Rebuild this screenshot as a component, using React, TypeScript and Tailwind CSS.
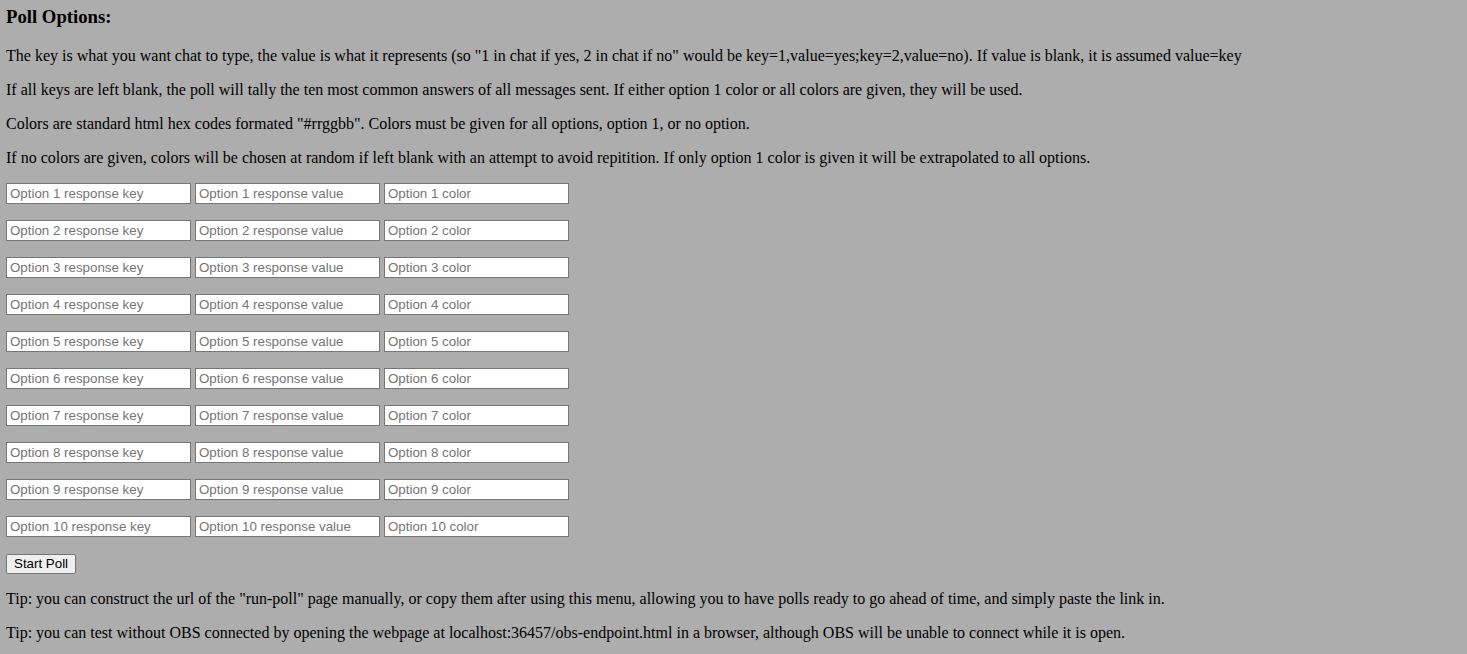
import React from "react";

export default function App() {
  const rows = Array.from({ length: 10 }, (_, i) => i + 1);
  const inputCls =
    "w-[185px] h-[21px] bg-white border border-[#767676] pl-[3px] pr-[2px] text-[13.33px] leading-[normal] font-['Liberation_Sans',Arial,sans-serif] text-black placeholder:text-[#757575] outline-none";
  return (
    <div className="min-h-[654px] bg-[#adadad] px-[6px] pt-[6px] pb-[1px] text-black font-['Liberation_Serif','Times_New_Roman',serif] text-[16px] leading-[normal] flow-root">
      <h3 className="mt-0 mb-[18.72px] text-[18.72px] font-bold leading-[normal]">Poll Options:</h3>
      <p className="my-4">
        The key is what you want chat to type, the value is what it represents (so "1 in chat if yes, 2 in chat if no" would be key=1,value=yes;key=2,value=no). If value is blank, it is assumed value=key
      </p>
      <p className="my-4">
        If all keys are left blank, the poll will tally the ten most common answers of all messages sent. If either option 1 color or all colors are given, they will be used.
      </p>
      <p className="my-4">
        Colors are standard html hex codes formated "#rrggbb". Colors must be given for all options, option 1, or no option.
      </p>
      <p className="my-4">
        If no colors are given, colors will be chosen at random if left blank with an attempt to avoid repitition. If only option 1 color is given it will be extrapolated to all options.
      </p>
      <div className="mt-4">
        {rows.map((n) => (
          <div key={n} className="flex gap-[4px] mb-4">
            <input className={inputCls} placeholder={`Option ${n} response key`} />
            <input className={inputCls} placeholder={`Option ${n} response value`} />
            <input className={inputCls} placeholder={`Option ${n} color`} />
          </div>
        ))}
      </div>
      <button className="block mt-[17px] h-[20px] px-[7px] bg-[#efefef] border border-[#767676] rounded-[2px] text-[13.33px] leading-[normal] font-['Liberation_Sans',Arial,sans-serif] text-black">
        Start Poll
      </button>
      <p className="my-4">
        Tip: you can construct the url of the "run-poll" page manually, or copy them after using this menu, allowing you to have polls ready to go ahead of time, and simply paste the link in.
      </p>
      <p className="my-4">
        Tip: you can test without OBS connected by opening the webpage at localhost:36457/obs-endpoint.html in a browser, although OBS will be unable to connect while it is open.
      </p>
    </div>
  );
}
